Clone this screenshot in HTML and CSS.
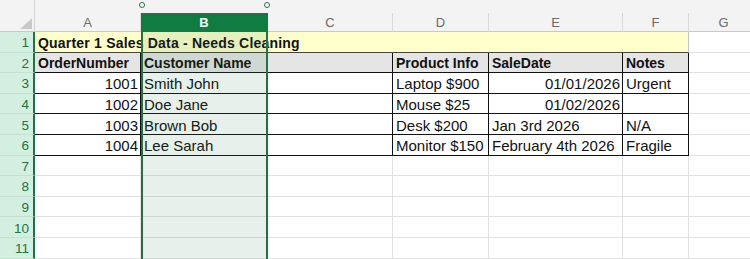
FILE: index.html
```html
<!DOCTYPE html>
<html lang="en">

<head>
    <meta charset="UTF-8">
    <meta name="viewport" content="width=device-width, initial-scale=1.0">
    <title>Sheet</title>
    <link rel="stylesheet" href="styles.css">
</head>

<body>
    <div class="sheet">
        <!-- top strip + column headers -->
        <div class="corner">
            <svg class="tri" width="12" height="11" viewBox="0 0 12 11"><polygon points="12,0 12,11 0,11" fill="#c9c9c9"/></svg>
        </div>
        <div class="handles">
            <span class="dot"></span>
            <span class="dot"></span>
        </div>
        <div class="colhead" style="grid-column: 2">A</div>
        <div class="colhead selected" style="grid-column: 3">B</div>
        <div class="colhead" style="grid-column: 4">C</div>
        <div class="colhead" style="grid-column: 5">D</div>
        <div class="colhead" style="grid-column: 6">E</div>
        <div class="colhead" style="grid-column: 7">F</div>
        <div class="colhead" style="grid-column: 8">G</div>

        <!-- row 1 -->
        <div class="rowhead">1</div>
        <div class="cell title">Quarter 1 Sales Data - Needs Cleaning</div>
        <div class="cell"></div>

        <!-- row 2 -->
        <div class="rowhead">2</div>
        <div class="cell bd head">OrderNumber</div>
        <div class="cell bd head">Customer Name</div>
        <div class="cell bd head"></div>
        <div class="cell bd head">Product Info</div>
        <div class="cell bd head">SaleDate</div>
        <div class="cell bd head">Notes</div>
        <div class="cell"></div>

        <!-- row 3 -->
        <div class="rowhead">3</div>
        <div class="cell bd num">1001</div>
        <div class="cell bd">Smith John</div>
        <div class="cell bd"></div>
        <div class="cell bd">Laptop $900</div>
        <div class="cell bd num">01/01/2026</div>
        <div class="cell bd">Urgent</div>
        <div class="cell"></div>

        <!-- row 4 -->
        <div class="rowhead">4</div>
        <div class="cell bd num">1002</div>
        <div class="cell bd">Doe Jane</div>
        <div class="cell bd"></div>
        <div class="cell bd">Mouse $25</div>
        <div class="cell bd num">01/02/2026</div>
        <div class="cell bd"></div>
        <div class="cell"></div>

        <!-- row 5 -->
        <div class="rowhead">5</div>
        <div class="cell bd num">1003</div>
        <div class="cell bd">Brown Bob</div>
        <div class="cell bd"></div>
        <div class="cell bd">Desk $200</div>
        <div class="cell bd">Jan 3rd 2026</div>
        <div class="cell bd">N/A</div>
        <div class="cell"></div>

        <!-- row 6 -->
        <div class="rowhead">6</div>
        <div class="cell bd num">1004</div>
        <div class="cell bd">Lee Sarah</div>
        <div class="cell bd"></div>
        <div class="cell bd">Monitor $150</div>
        <div class="cell bd">February 4th 2026</div>
        <div class="cell bd">Fragile</div>
        <div class="cell"></div>

        <!-- empty rows -->
        <div class="rowhead">7</div>
        <div class="cell"></div><div class="cell"></div><div class="cell"></div><div class="cell"></div><div class="cell"></div><div class="cell"></div><div class="cell"></div>
        <div class="rowhead">8</div>
        <div class="cell"></div><div class="cell"></div><div class="cell"></div><div class="cell"></div><div class="cell"></div><div class="cell"></div><div class="cell"></div>
        <div class="rowhead">9</div>
        <div class="cell"></div><div class="cell"></div><div class="cell"></div><div class="cell"></div><div class="cell"></div><div class="cell"></div><div class="cell"></div>
        <div class="rowhead">10</div>
        <div class="cell"></div><div class="cell"></div><div class="cell"></div><div class="cell"></div><div class="cell"></div><div class="cell"></div><div class="cell"></div>
        <div class="rowhead">11</div>
        <div class="cell"></div><div class="cell"></div><div class="cell"></div><div class="cell"></div><div class="cell"></div><div class="cell"></div><div class="cell"></div>

        <!-- column B selection, laid over the cells -->
        <div class="selection"></div>
    </div>
</body>

</html>
```

FILE: styles.css
```css
* {
    box-sizing: border-box;
}

body {
    margin: 0;
    overflow: hidden;
    font-family: "Liberation Sans", Arial, sans-serif;
}

.sheet {
    position: relative;
    display: grid;
    grid-template-columns: 35px 106px 127px 125px 96px 134px 66px 70px;
    grid-template-rows: 13px 19px repeat(11, 20.6px);
    background: #f3f3f3;
    width: 769px;
}

.corner {
    grid-column: 1;
    grid-row: 1 / 3;
    border-right: 1px solid #d6d6d6;
    border-bottom: 1px solid #c8c8c8;
    display: flex;
    justify-content: flex-end;
    align-items: flex-end;
    padding: 0 2px 2px 0;
}

.handles {
    grid-column: 3;
    grid-row: 1;
    display: flex;
    justify-content: space-between;
    margin: 0 -2px 0 -2px;
    padding-top: 2px;
}

.handles .dot {
    width: 6px;
    height: 6px;
    border: 1px solid #217346;
    border-radius: 50%;
    background: #fff;
}

.colhead {
    grid-row: 2;
    border-right: 1px solid #dadada;
    border-bottom: 1px solid #c8c8c8;
    color: #6b6b6b;
    font-size: 13px;
    display: flex;
    align-items: center;
    justify-content: center;
}

.colhead.selected {
    background: #107c41;
    color: #fff;
    font-weight: bold;
    border-color: #107c41;
}

.rowhead {
    grid-column: 1;
    background: #d3efdf;
    color: #217346;
    font-size: 13.5px;
    border-right: 2px solid #217346;
    border-bottom: 1px solid #c2e2cf;
    display: flex;
    align-items: center;
    justify-content: flex-end;
    padding: 2px 4px 0 0;
}

.cell {
    background: #fff;
    border-right: 1px solid #e1e1e1;
    border-bottom: 1px solid #e1e1e1;
    font-size: 15px;
    color: #111;
    padding: 2px 2px 0 3px;
    white-space: nowrap;
    overflow: hidden;
    display: flex;
    align-items: center;
}

.cell.title {
    grid-column: 2 / 8;
    background: #ffffcc;
    font-weight: bold;
    font-size: 14px;
    letter-spacing: 0.2px;
    border-right-color: #c4c4c4;
    border-bottom-color: #444;
}

.cell.bd {
    border-right-color: #111;
    border-bottom-color: #111;
}

.cell.head {
    background: #e5e5e5;
    font-weight: bold;
    font-size: 14px;
}

.cell.num {
    justify-content: flex-end;
}

.selection {
    position: absolute;
    inset: 0;
    grid-column: 3 / 4;
    grid-row: 3 / 14;
    border-left: 2px solid #217346;
    border-right: 2px solid #217346;
    background: rgba(33, 115, 70, 0.11);
    pointer-events: none;
}
```
